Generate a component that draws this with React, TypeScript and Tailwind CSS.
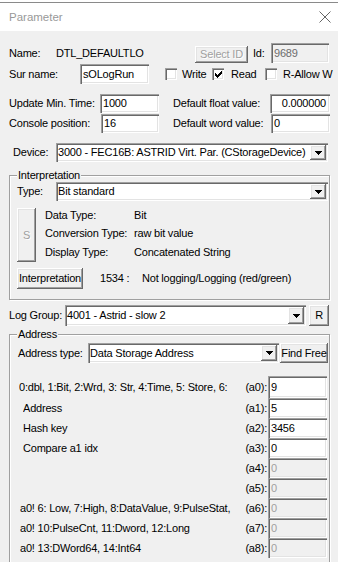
import React from "react";

const SUNKEN =
  "shadow-[inset_1px_1px_0_#a0a0a0,inset_2px_2px_0_#696969,inset_-1px_-1px_0_#ffffff,inset_-2px_-2px_0_#e3e3e3]";
const RAISED =
  "shadow-[inset_-1px_-1px_0_#696969,inset_1px_1px_0_#ffffff,inset_-2px_-2px_0_#a0a0a0,inset_2px_2px_0_#e3e3e3]";
const GROUP =
  "border border-[#a0a0a0] shadow-[inset_1px_1px_0_#ffffff,1px_1px_0_#ffffff]";

type InputProps = {
  className: string;
  value: string;
  disabled?: boolean;
  right?: boolean;
  tone?: string;
};

function Input({ className, value, disabled, right, tone }: InputProps) {
  return (
    <div
      className={`${className} ${SUNKEN} ${
        disabled ? "bg-[#f0f0f0]" : "bg-white"
      } ${tone ?? "text-black"} flex items-center shrink-0 whitespace-nowrap ${
        right ? "justify-end pr-[4px]" : "pl-[3px]"
      }`}
    >
      {value}
    </div>
  );
}

function Arrow() {
  return (
    <div
      className={`w-[16px] my-[2px] mr-[2px] bg-[#f0f0f0] ${RAISED} flex items-center justify-center shrink-0`}
    >
      <svg width="7" height="4" viewBox="0 0 7 4" shapeRendering="crispEdges">
        <path d="M0 0H7V1H6V2H5V3H4V4H3V3H2V2H1V1H0Z" fill="#000" />
      </svg>
    </div>
  );
}

function Select({ className, value }: { className: string; value: string }) {
  return (
    <div className={`${className} ${SUNKEN} bg-white flex items-stretch shrink-0`}>
      <div className="flex-1 min-w-0 flex items-center pl-[2px] whitespace-nowrap overflow-hidden">
        {value}
      </div>
      <Arrow />
    </div>
  );
}

function Button({
  className,
  children,
  disabled,
}: {
  className: string;
  children: React.ReactNode;
  disabled?: boolean;
}) {
  return (
    <div
      className={`${className} ${RAISED} bg-[#f0f0f0] flex items-center justify-center shrink-0 whitespace-nowrap ${
        disabled ? "text-[#a0a0a0] [text-shadow:1px_1px_0_#ffffff]" : "text-black"
      }`}
    >
      {children}
    </div>
  );
}

function Check({ checked }: { checked?: boolean }) {
  return (
    <div className={`w-[12px] h-[12px] bg-white ${SUNKEN} flex items-center justify-center shrink-0`}>
      {checked && (
        <svg width="7" height="7" viewBox="0 0 7 7" shapeRendering="crispEdges">
          <path
            d="M6 0h1v1h-1z M5 1h2v1h-2z M0 2h1v1h-1z M4 2h3v1h-3z M0 3h2v1h-2z M3 3h3v1h-3z M0 4h5v1h-5z M1 5h3v1h-3z M2 6h1v1h-1z"
            fill="#000"
          />
        </svg>
      )}
    </div>
  );
}

type AddrRow = {
  text: string;
  label: string;
  value: string;
  disabled?: boolean;
  pad: string;
  h: string;
};

const ROWS: AddrRow[] = [
  { text: "0:dbl, 1:Bit, 2:Wrd, 3: Str, 4:Time, 5: Store, 6:", label: "(a0):", value: "9", pad: "pl-[9px]", h: "h-[22px]" },
  { text: "Address", label: "(a1):", value: "5", pad: "pl-[13px]", h: "h-[20px]" },
  { text: "Hash key", label: "(a2):", value: "3456", pad: "pl-[13px]", h: "h-[20px]" },
  { text: "Compare a1 idx", label: "(a3):", value: "0", pad: "pl-[13px]", h: "h-[20px]" },
  { text: "", label: "(a4):", value: "0", disabled: true, pad: "pl-[13px]", h: "h-[20px]" },
  { text: "", label: "(a5):", value: "0", disabled: true, pad: "pl-[13px]", h: "h-[20px]" },
  { text: "a0! 6: Low, 7:High, 8:DataValue, 9:PulseStat,", label: "(a6):", value: "0", disabled: true, pad: "pl-[10px]", h: "h-[20px]" },
  { text: "a0! 10:PulseCnt, 11:Dword, 12:Long", label: "(a7):", value: "0", disabled: true, pad: "pl-[10px]", h: "h-[20px]" },
  { text: "a0! 13:DWord64, 14:Int64", label: "(a8):", value: "0", disabled: true, pad: "pl-[10px]", h: "h-[20px]" },
];

export default function App() {
  return (
    <div className="w-[338px] h-[562px] overflow-hidden bg-[#f0f0f0] font-['Liberation_Sans',Arial,sans-serif] text-[11px] leading-[13px] tracking-[-0.2px] text-black">
      {/* sliver of window behind */}
      <div className="h-[2px] bg-white" />
      <div className="h-[1px] bg-[#8a8a8a]" />

      {/* title bar */}
      <div className="h-[28px] bg-white flex items-center justify-between pl-[9px] pr-[7px]">
        <span className="text-[11.5px] tracking-normal text-[#999999]">Parameter</span>
        <svg width="12" height="12" viewBox="0 0 12 12">
          <path d="M0.5 0.5L11.5 11.5M11.5 0.5L0.5 11.5" stroke="#666666" strokeWidth="1" />
        </svg>
      </div>

      <div className="pl-[9px]">
        {/* Name */}
        <div className="mt-[12px] h-[20px] flex items-center">
          <span className="w-[47px] shrink-0">Name:</span>
          <span className="w-[139px] shrink-0">DTL_DEFAULTLO</span>
          <Button className="w-[53px] h-[17px] mt-[2px]" disabled>
            Select ID
          </Button>
          <span className="ml-[5px] w-[18px] shrink-0">Id:</span>
          <Input className="w-[58px] h-[20px]" value="9689" disabled tone="text-[#6d6d6d]" />
        </div>

        {/* Sur name */}
        <div className="mt-[1px] h-[20px] flex items-center">
          <span className="w-[71px] shrink-0">Sur name:</span>
          <Input className="w-[69px] h-[20px]" value="sOLogRun" />
          <div className="ml-[16px]">
            <Check />
          </div>
          <span className="ml-[5px] w-[30px] shrink-0">Write</span>
          <Check checked />
          <span className="ml-[7px] w-[34px] shrink-0">Read</span>
          <Check />
          <span className="ml-[6px] whitespace-nowrap">R-Allow W</span>
        </div>

        {/* Update min time */}
        <div className="mt-[10px] h-[19px] flex items-center">
          <span className="w-[91px] shrink-0">Update Min. Time:</span>
          <Input className="w-[59px] h-[19px]" value="1000" />
          <span className="ml-[14px] w-[97px] shrink-0">Default float value:</span>
          <Input className="w-[60px] h-[19px]" value="0.000000" right />
        </div>

        {/* Console position */}
        <div className="mt-[1px] h-[19px] flex items-center">
          <span className="w-[92px] shrink-0">Console position:</span>
          <Input className="w-[58px] h-[19px]" value="16" />
          <span className="ml-[14px] w-[98px] shrink-0">Default word value:</span>
          <Input className="w-[59px] h-[19px]" value="0" />
        </div>

        {/* Device */}
        <div className="mt-[10px] h-[19px] flex items-center">
          <span className="ml-[4px] w-[43px] shrink-0">Device:</span>
          <Select className="w-[272px] h-[19px]" value="3000 - FEC16B: ASTRID Virt. Par. (CStorageDevice)" />
        </div>

        {/* Interpretation group */}
        <div className={`relative mt-[13px] w-[321px] ${GROUP} pt-[6px] pl-[7px] pb-[10px]`}>
          <span className="absolute left-[7px] top-[-7px] px-[1px] bg-[#f0f0f0]">Interpretation</span>

          <div className="h-[19px] flex items-center">
            <span className="w-[39px] shrink-0">Type:</span>
            <Select className="w-[272px] h-[19px]" value="Bit standard" />
          </div>

          <div className="mt-[7px] flex items-start">
            <Button className="w-[19px] h-[54px]" disabled>
              S
            </Button>
            <div className="ml-[9px] -mt-[2px] flex flex-col">
              <div className="h-[18px] flex items-center">
                <span className="w-[89px] shrink-0">Data Type:</span>
                <span>Bit</span>
              </div>
              <div className="h-[18px] flex items-center">
                <span className="w-[89px] shrink-0">Conversion Type:</span>
                <span>raw bit value</span>
              </div>
              <div className="h-[21px] flex items-center">
                <span className="w-[89px] shrink-0">Display Type:</span>
                <span>Concatenated String</span>
              </div>
            </div>
          </div>

          <div className="mt-[5px] h-[21px] flex items-center">
            <Button className="w-[66px] h-[21px]">Interpretation</Button>
            <span className="ml-[17px] w-[42px] shrink-0">1534 :</span>
            <span className="whitespace-nowrap">Not logging/Logging (red/green)</span>
          </div>
        </div>

        {/* Log group */}
        <div className="mt-[5px] h-[21px] flex items-center">
          <span className="w-[56px] shrink-0">Log Group:</span>
          <Select className="w-[241px] h-[21px]" value="4001 - Astrid - slow 2" />
          <Button className="ml-[3px] w-[20px] h-[21px]">R</Button>
        </div>

        {/* Address group */}
        <div className={`relative mt-[8px] w-[321px] ${GROUP} pt-[8px] pb-[10px]`}>
          <span className="absolute left-[7px] top-[-7px] px-[1px] bg-[#f0f0f0]">Address</span>

          <div className="pl-[8px] h-[20px] flex items-center">
            <span className="w-[70px] shrink-0">Address type:</span>
            <Select className="w-[191px] h-[20px]" value="Data Storage Address" />
            <Button className="ml-[1px] w-[48px] h-[20px]">Find Free</Button>
          </div>

          <div className="mt-[13px] flex flex-col">
            {ROWS.map((r) => (
              <div key={r.label} className={`${r.h} ${r.pad} pr-[2px] flex items-center`}>
                <span className="flex-1 min-w-0 whitespace-nowrap overflow-hidden">{r.text}</span>
                <span className="w-[26px] pr-[1px] text-right shrink-0">{r.label}</span>
                <Input
                  className={`w-[59px] ${r.h}`}
                  value={r.value}
                  disabled={r.disabled}
                  tone={r.disabled ? "text-[#a0a0a0]" : "text-black"}
                />
              </div>
            ))}
          </div>
        </div>
      </div>
    </div>
  );
}
